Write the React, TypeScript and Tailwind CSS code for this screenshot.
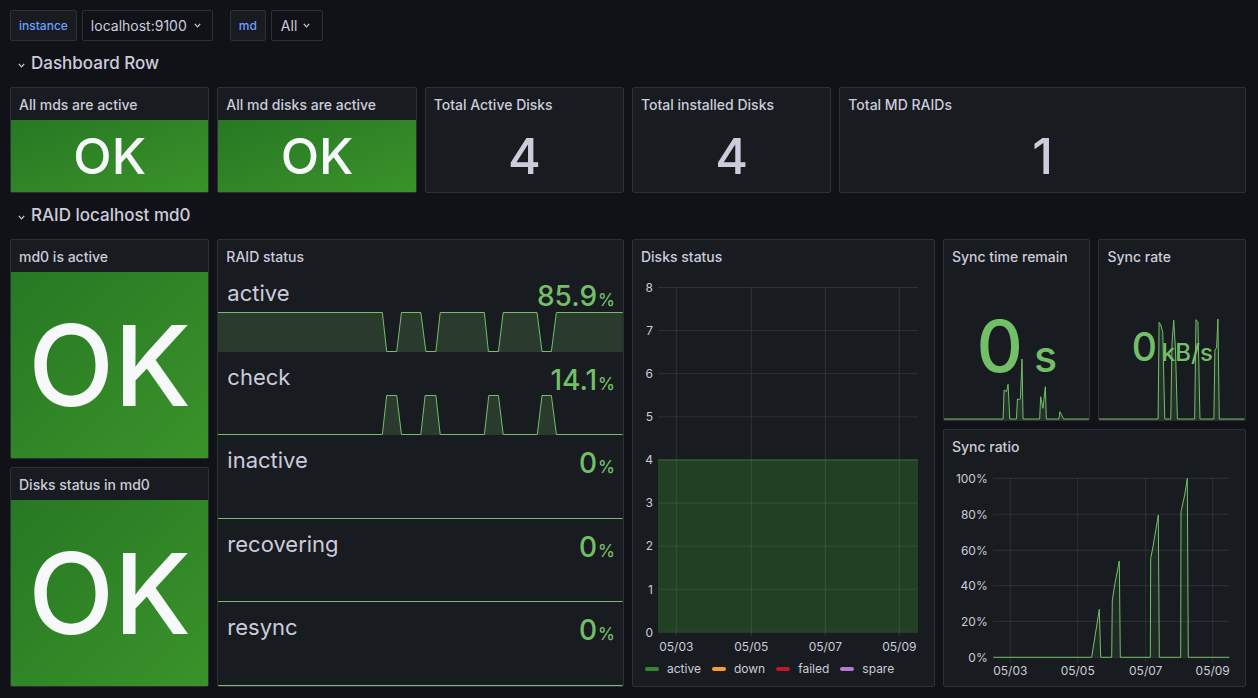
import React from "react";

type Pt = [number, number];

const ACTIVE_LINE =
  "M0 0.5 L163.7 0.5 L168 39.5 L178 39.5 L182.7 0.5 L202 0.5 L207 39.5 L217 39.5 L221.3 0.5 L265.3 0.5 L269.3 39.5 L279.3 39.5 L284 0.5 L317.7 0.5 L322.7 39.5 L332 39.5 L337 0.5 L403 0.5";
const CHECK_LINE =
  "M0 39.5 L163.7 39.5 L168 0.5 L178 0.5 L182.7 39.5 L202 39.5 L206.3 0.5 L217 0.5 L221.3 39.5 L265.3 39.5 L269.7 0.5 L279.3 0.5 L284 39.5 L318 39.5 L322.7 0.5 L332 0.5 L337 39.5 L403 39.5";
const FLAT_LINE = "M0 39.5 L403 39.5";

const syncTime: Pt[] = [
  [944, 419], [1003.3, 419], [1004.3, 390], [1006.7, 391.7], [1008.3, 384.3], [1010, 419],
  [1016.7, 419], [1017.7, 399], [1020, 399.7], [1020.7, 398.3], [1022.3, 359], [1023.3, 419],
  [1040, 419], [1041, 396.7], [1043.3, 408.3], [1045.7, 386.7], [1046.7, 419],
  [1059.3, 419], [1060.3, 411.7], [1064, 419], [1090, 419],
];

const syncRate: Pt[] = [
  [1100, 419], [1159.3, 419], [1160.3, 322.3], [1162, 325], [1164, 332.3], [1166, 419],
  [1172, 419], [1173.3, 341.7], [1175, 320.3], [1176.7, 348.3], [1178.7, 419],
  [1196, 419], [1197.3, 319.7], [1199.3, 322.3], [1201.3, 419],
  [1215.3, 419], [1216.3, 350], [1218, 347.7], [1219.3, 319], [1220.7, 419], [1246, 419],
];

const syncRatio: Pt[] = [
  [993.3, 657.3], [1091.7, 657.3], [1099.3, 609.3], [1100.7, 657.3],
  [1111.7, 657.3], [1112.3, 600], [1114.7, 585], [1119.3, 561], [1120.3, 657.3],
  [1150.3, 657.3], [1150.7, 558.3], [1153.3, 545], [1158.3, 515], [1159.3, 657.3],
  [1180.7, 657.3], [1181, 511.7], [1184.7, 495], [1187.3, 478.3], [1188.3, 657.3],
  [1229.3, 657.3],
];

const pts = (p: Pt[]) => p.map(([x, y]) => `${x},${y}`).join(" ");
const area = (p: Pt[], base: number) =>
  pts([...p, [p[p.length - 1][0], base], [p[0][0], base]]);

function Chevron({ className = "" }: { className?: string }) {
  return (
    <svg width="7" height="5" viewBox="0 0 7 5" className={className}>
      <path d="M0.8 0.9 L3.5 3.9 L6.2 0.9" fill="none" stroke="#ccccdc" strokeWidth="1.2" />
    </svg>
  );
}

function Panel({
  title,
  className = "",
  titleClass = "",
  children,
}: {
  title: string;
  className?: string;
  titleClass?: string;
  children?: React.ReactNode;
}) {
  return (
    <div
      className={`flex min-h-0 flex-col overflow-hidden rounded-[2px] border border-[#2d3036] bg-[#181b1f] ${className}`}
    >
      <div className="h-8 shrink-0 px-2 pt-[7px] text-sm font-medium leading-5 text-[#ccccdc]">
        <div className={`overflow-hidden whitespace-nowrap ${titleClass}`}>{title}</div>
      </div>
      <div className="relative flex min-h-0 flex-1 flex-col">{children}</div>
    </div>
  );
}

function Ok({ big }: { big?: boolean }) {
  return (
    <div
      className={`flex flex-1 items-center justify-center bg-linear-to-br from-[#277823] to-[#3a932a] font-medium leading-none text-[#f7f8fa] ${
        big ? "text-[112px]" : "text-[50px]"
      }`}
    >
      OK
    </div>
  );
}

function Num({ v }: { v: string }) {
  return (
    <div className="flex flex-1 items-center justify-center text-[50px] font-medium leading-none text-[#ccccdc]">
      {v}
    </div>
  );
}

function RaidRow({ name, value, line }: { name: string; value: string; line: string }) {
  return (
    <div className="relative flex flex-1 items-start justify-between pl-[9px] pr-2 pt-[11px]">
      <svg
        className="absolute bottom-0 left-0 h-[40px] w-full"
        viewBox="0 0 403 40"
        preserveAspectRatio="none"
      >
        <path d={`${line} L403 40 L0 40 Z`} fill="#73bf69" fillOpacity="0.2" />
        <path d={line} fill="none" stroke="#73bf69" strokeWidth="1" vectorEffect="non-scaling-stroke" />
      </svg>
      <span className="relative mt-[1px] text-[22px] leading-[26px] text-[#ccccdc]">{name}</span>
      <span className="relative flex items-baseline font-medium text-[#73bf69]">
        <span className="text-[28px] leading-[34px]">{value}</span>
        <span className="ml-[1px] text-[17px]">%</span>
      </span>
    </div>
  );
}

function DisksChart() {
  const ys = [8, 7, 6, 5, 4, 3, 2, 1, 0];
  const yOf = (v: number) => 632.3 - v * 43.1;
  const xs: [string, number][] = [
    ["05/03", 676.3],
    ["05/05", 751.3],
    ["05/07", 825.3],
    ["05/09", 899.3],
  ];
  return (
    <svg className="h-[383px] w-full shrink-0" viewBox="633 272 301 383">
      <rect x="658" y={yOf(4)} width="260" height={yOf(0) - yOf(4)} fill="#37872d" fillOpacity="0.35" />
      {ys.map((v) => (
        <g key={v}>
          <line x1="658" x2="918" y1={yOf(v)} y2={yOf(v)} stroke="#ccccdc" strokeOpacity="0.12" />
          <text x="653" y={yOf(v) + 4.3} textAnchor="end" fontSize="12" fill="#ccccdc">
            {v}
          </text>
        </g>
      ))}
      {xs.map(([l, x]) => (
        <g key={l}>
          <line x1={x} x2={x} y1={yOf(8)} y2="636" stroke="#ccccdc" strokeOpacity="0.12" />
          <text x={x} y="651.3" textAnchor="middle" fontSize="12" fill="#ccccdc">
            {l}
          </text>
        </g>
      ))}
      <line x1="658" x2="918" y1={yOf(4)} y2={yOf(4)} stroke="#37872d" strokeOpacity="0.6" />
    </svg>
  );
}

function RatioChart() {
  const ys: [string, number][] = [
    ["100%", 478.3],
    ["80%", 514.3],
    ["60%", 550.3],
    ["40%", 585.7],
    ["20%", 621.3],
    ["0%", 657.3],
  ];
  const xs: [string, number][] = [
    ["05/03", 1010.3],
    ["05/05", 1077.7],
    ["05/07", 1145.7],
    ["05/09", 1212.7],
  ];
  return (
    <svg className="h-full w-full" viewBox="944 462 301 224">
      {ys.map(([l, y]) => (
        <g key={l}>
          <line x1="993" x2="1229" y1={y} y2={y} stroke="#ccccdc" strokeOpacity="0.12" />
          <text x="987.7" y={y + 4.3} textAnchor="end" fontSize="12" fill="#ccccdc">
            {l}
          </text>
        </g>
      ))}
      {xs.map(([l, x]) => (
        <g key={l}>
          <line x1={x} x2={x} y1="478.3" y2="662" stroke="#ccccdc" strokeOpacity="0.12" />
          <text x={x} y="675" textAnchor="middle" fontSize="12" fill="#ccccdc">
            {l}
          </text>
        </g>
      ))}
      <polygon points={area(syncRatio, 657.3)} fill="#73bf69" fillOpacity="0.1" />
      <polyline points={pts(syncRatio)} fill="none" stroke="#73bf69" strokeWidth="1" />
    </svg>
  );
}

function Spark({ data, box }: { data: Pt[]; box: string }) {
  return (
    <svg className="absolute inset-0 h-full w-full" viewBox={box} preserveAspectRatio="none">
      <polygon points={area(data, 420)} fill="#73bf69" fillOpacity="0.15" />
      <polyline points={pts(data)} fill="none" stroke="#73bf69" strokeWidth="1" vectorEffect="non-scaling-stroke" />
    </svg>
  );
}

const legend: [string, string][] = [
  ["active", "bg-[#37872d]"],
  ["down", "bg-[#ff9830]"],
  ["failed", "bg-[#c4162a]"],
  ["spare", "bg-[#b877d9]"],
];

export default function App() {
  return (
    <div className="h-screen w-full overflow-hidden bg-[#111217] font-[family-name:Inter,sans-serif] text-[#ccccdc]">
      {/* variables */}
      <div className="flex items-center pl-[10px] pt-[10px]">
        <div className="flex h-[31px] items-center rounded-[2px] border border-[#2d3036] bg-[#181b1f] px-[8px] text-xs font-medium text-[#6e9fff]">
          instance
        </div>
        <div className="ml-[5px] flex h-[31px] items-center gap-[7px] rounded-[2px] border border-[#2d3036] bg-[#111217] pl-[8px] pr-[11px] text-sm text-[#ccccdc]">
          localhost:9100
          <Chevron />
        </div>
        <div className="ml-[17px] flex h-[31px] items-center rounded-[2px] border border-[#2d3036] bg-[#181b1f] px-[8px] text-xs font-medium text-[#6e9fff]">
          md
        </div>
        <div className="ml-[5px] flex h-[31px] items-center gap-[6px] rounded-[2px] border border-[#2d3036] bg-[#111217] pl-[9px] pr-[12px] text-sm text-[#ccccdc]">
          All
          <Chevron />
        </div>
      </div>

      <div className="mt-[8px] grid auto-rows-[30px] grid-cols-24 gap-2 pl-[10px] pr-[12px]">
        <div className="col-span-24 row-start-1 flex items-center gap-[6px] pl-[8px] text-[17px] font-medium text-[#ccccdc]">
          <Chevron className="mt-[3px]" />
          Dashboard Row
        </div>

        <Panel title="All mds are active" className="col-span-4 col-start-1 row-span-3 row-start-2">
          <Ok />
        </Panel>
        <Panel title="All md disks are active" className="col-span-4 col-start-5 row-span-3 row-start-2">
          <Ok />
        </Panel>
        <Panel title="Total Active Disks" className="col-span-4 col-start-9 row-span-3 row-start-2">
          <Num v="4" />
        </Panel>
        <Panel title="Total installed Disks" className="col-span-4 col-start-13 row-span-3 row-start-2">
          <Num v="4" />
        </Panel>
        <Panel title="Total MD RAIDs" className="col-span-8 col-start-17 row-span-3 row-start-2">
          <Num v="1" />
        </Panel>

        <div className="col-span-24 row-start-5 flex items-center gap-[6px] pl-[8px] text-[17px] font-medium text-[#ccccdc]">
          <Chevron className="mt-[3px]" />
          RAID localhost md0
        </div>

        <Panel title="md0 is active" className="col-span-4 col-start-1 row-span-6 row-start-6">
          <Ok big />
        </Panel>
        <Panel title="Disks status in md0" className="col-span-4 col-start-1 row-span-6 row-start-12">
          <Ok big />
        </Panel>

        <Panel title="RAID status" className="col-span-8 col-start-5 row-span-12 row-start-6">
          <div className="-mt-[4px] flex flex-1 flex-col">
            <RaidRow name="active" value="85.9" line={ACTIVE_LINE} />
            <RaidRow name="check" value="14.1" line={CHECK_LINE} />
            <RaidRow name="inactive" value="0" line={FLAT_LINE} />
            <RaidRow name="recovering" value="0" line={FLAT_LINE} />
            <RaidRow name="resync" value="0" line={FLAT_LINE} />
          </div>
        </Panel>

        <Panel title="Disks status" className="col-span-6 col-start-13 row-span-12 row-start-6">
          <DisksChart />
          <div className="flex flex-1 items-start gap-[11px] pl-[12px] pt-[6px] text-xs leading-4 text-[#ccccdc]">
            {legend.map(([n, c]) => (
              <div key={n} className="flex items-center gap-[8px]">
                <span className={`h-[4px] w-[14px] rounded-full ${c}`} />
                {n}
              </div>
            ))}
          </div>
        </Panel>

        <Panel
          title="Sync time remaining"
          titleClass="max-w-[115px]"
          className="col-span-3 col-start-19 row-span-5 row-start-6"
        >
          <Spark data={syncTime} box="944 272 146 148" />
          <div className="relative flex flex-1 items-center justify-center">
            <span className="flex items-baseline gap-[11px] font-medium leading-none text-[#73bf69]">
              <span className="text-[72px]">0</span>
              <span className="text-[43px]">s</span>
            </span>
          </div>
        </Panel>
        <Panel title="Sync rate" className="col-span-3 col-start-22 row-span-5 row-start-6">
          <Spark data={syncRate} box="1100 272 146 148" />
          <div className="relative flex flex-1 items-center justify-center">
            <span className="flex items-baseline gap-[5px] font-medium leading-none text-[#73bf69]">
              <span className="text-[39px]">0</span>
              <span className="text-[24px]">kB/s</span>
            </span>
          </div>
        </Panel>

        <Panel title="Sync ratio" className="col-span-6 col-start-19 row-span-7 row-start-11">
          <RatioChart />
        </Panel>
      </div>
    </div>
  );
}
